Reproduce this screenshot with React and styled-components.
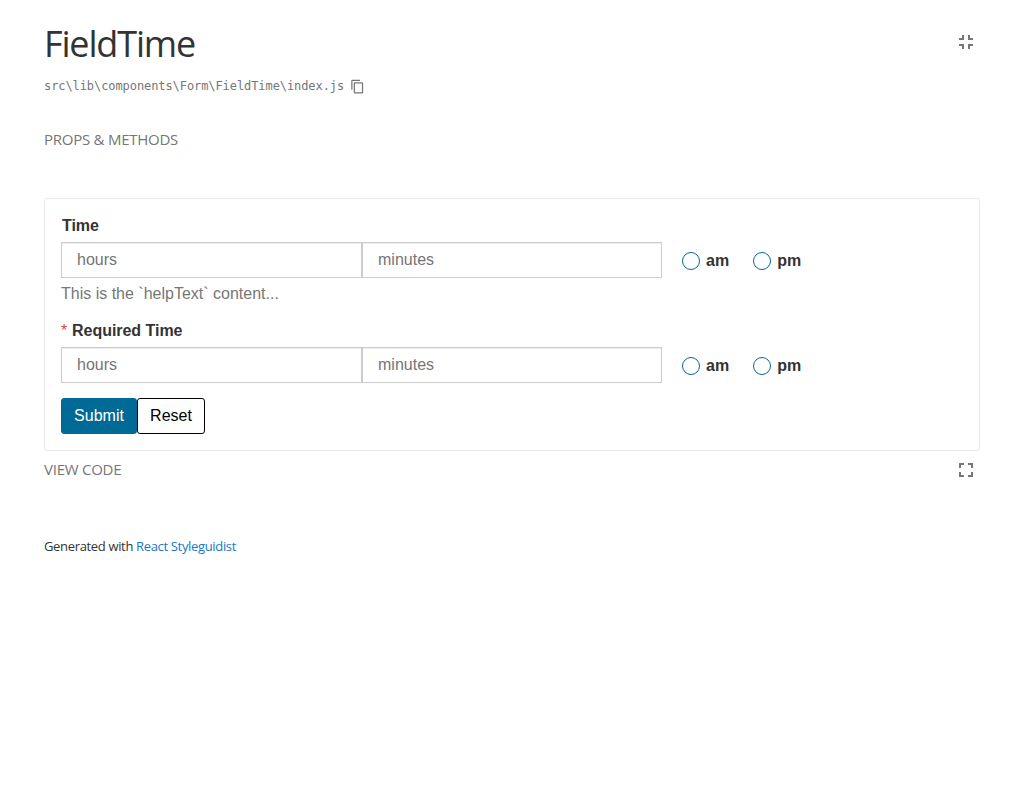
import React from "react";
import styled, { createGlobalStyle } from "styled-components";

const Global = createGlobalStyle`
  *, *::before, *::after { box-sizing: border-box; }
  body { margin: 0; background: #fff; color: #333; font-family: "Open Sans", "Noto Sans", sans-serif; }
`;
const Page = styled.main`
  padding: 16px 44px 0;
  display: flex;
  flex-direction: column;
`;
const Header = styled.header`
  display: flex;
  justify-content: space-between;
  align-items: center;
  height: 54px;
  padding-right: 2px;
`;
const Title = styled.h1`
  margin: 0;
  padding-top: 1px;
  font: 400 36px/54px "Open Sans", "Noto Sans", sans-serif;
  white-space: nowrap;
`;
const Fit = styled.span`
  display: inline-block;
  white-space: nowrap;
  letter-spacing: ${(p) => p.$ls || 0}px;
`;
const IconButton = styled.button`
  display: flex;
  padding: 0 0 ${(p) => p.$lift || 0}px;
  border: 0;
  background: none;
  color: #767676;
`;
const Path = styled.div`
  display: flex;
  align-items: center;
  gap: 6px;
  height: 16px;
  margin-top: 8px;
  color: #767676;
  font: 12px/16px "DejaVu Sans Mono", monospace;
  svg { margin-top: 1px; }
`;
const TabRow = styled.div`
  display: flex;
  justify-content: space-between;
  align-items: center;
  height: 20px;
  margin-top: ${(p) => p.$top}px;
  padding-right: 2px;
  color: #767676;
  font: 15px/18px "Open Sans", "Noto Sans", sans-serif;
  > span { padding-bottom: 2px; }
`;
const Preview = styled.section`
  height: 253px;
  margin-top: 48px;
  padding: 16px;
  border: 1px solid #e8e8e8;
  border-radius: 3px;
  font: 16px/24px "Liberation Sans", Arial, sans-serif;
`;
const Label = styled.div`
  height: 24px;
  padding-left: 1px;
  margin: ${(p) => p.$top || 0}px 0 3px;
  line-height: 22px;
  font-weight: 700;
  letter-spacing: -0.03px;
`;
const Star = styled.span`
  display: inline-block;
  width: 11px;
  margin-left: -1px;
  color: #d64a38;
  font-weight: 400;
`;
const Fields = styled.div`
  display: flex;
  align-items: center;
  height: 36px;
`;
const Input = styled.input`
  width: ${(p) => p.$w}px;
  height: 36px;
  padding: 0 15px;
  border: 1px solid #ccc;
  border-radius: 0;
  box-shadow: inset 0 1px 1px rgba(0, 0, 0, 0.075);
  font: inherit;
  &::placeholder { color: #757575; opacity: 1; }
`;
const Radio = styled.label`
  display: flex;
  align-items: center;
  margin-left: ${(p) => p.$left}px;
  padding-top: 2px;
  gap: 6px;
  font-weight: 700;
  &::before {
    content: "";
    width: 18px;
    height: 18px;
    border: 1px solid #006a96;
    border-radius: 50%;
  }
`;
const Help = styled.div`
  height: 24px;
  margin-top: 4px;
  color: #767676;
`;
const Actions = styled.div`
  display: flex;
  margin-top: 15px;
`;
const Button = styled.button`
  width: ${(p) => p.$w}px;
  height: 36px;
  padding: 0 0 1px;
  border: 1px solid ${(p) => (p.$primary ? "#006a96" : "#000")};
  border-radius: 3px;
  background: ${(p) => (p.$primary ? "#006a96" : "#fff")};
  color: ${(p) => (p.$primary ? "#fff" : "#000")};
  font: inherit;
`;
const Footer = styled.footer`
  margin-top: 56px;
  font: 13px/20px "Open Sans", "Noto Sans", sans-serif;
`;
const Link = styled.a`
  color: #1978c8;
`;

const Collapse = () => (
  <svg width="24" height="24" viewBox="0 0 24 24" fill="currentColor"><path d="M5 16h3v3h2v-5H5v2zm3-8H5v2h5V5H8v3zm6 11h2v-3h3v-2h-5v5zm2-11V5h-2v5h5V8h-3z" /></svg>
);
const Expand = () => (
  <svg width="24" height="24" viewBox="0 0 24 24" fill="currentColor"><path d="M7 14H5v5h5v-2H7v-3zm-2-4h2V7h3V5H5v5zm12 7h-3v2h5v-5h-2v3zM14 5v2h3v3h2V5h-5z" /></svg>
);
const Copy = () => (
  <svg width="15" height="15" viewBox="0 0 24 24" fill="currentColor"><path d="M16 1H4c-1.1 0-2 .9-2 2v14h2V3h12V1zm3 4H8c-1.1 0-2 .9-2 2v14c0 1.1.9 2 2 2h11c1.1 0 2-.9 2-2V7c0-1.1-.9-2-2-2zm0 16H8V7h11v14z" /></svg>
);
const TimeInputs = () => (
  <Fields>
    <Input $w={301} placeholder="hours" />
    <Input $w={300} placeholder="minutes" />
    <Radio $left={20}>am</Radio>
    <Radio $left={24}>pm</Radio>
  </Fields>
);

export default function App() {
  return (
    <>
      <Global />
      <Page>
        <Header>
          <Title><Fit $ls={-1.15}>FieldTime</Fit></Title>
          <IconButton $lift={2} aria-label="Collapse"><Collapse /></IconButton>
        </Header>
        <Path><Fit $ls={-0.08}>src\lib\components\Form\FieldTime\index.js</Fit><Copy /></Path>
        <TabRow $top={36}><Fit $ls={-0.25}>PROPS &amp; METHODS</Fit></TabRow>
        <Preview>
          <Label>Time</Label>
          <TimeInputs />
          <Help>This is the `helpText` content...</Help>
          <Label $top={14}><Star>*</Star>Required Time</Label>
          <TimeInputs />
          <Actions>
            <Button $primary $w={76}>Submit</Button>
            <Button $w={68}>Reset</Button>
          </Actions>
        </Preview>
        <TabRow $top={9}><Fit $ls={-0.25}>VIEW CODE</Fit><IconButton aria-label="Expand"><Expand /></IconButton></TabRow>
        <Footer><Fit $ls={-0.34}>Generated with <Link>React Styleguidist</Link></Fit></Footer>
      </Page>
    </>
  );
}
